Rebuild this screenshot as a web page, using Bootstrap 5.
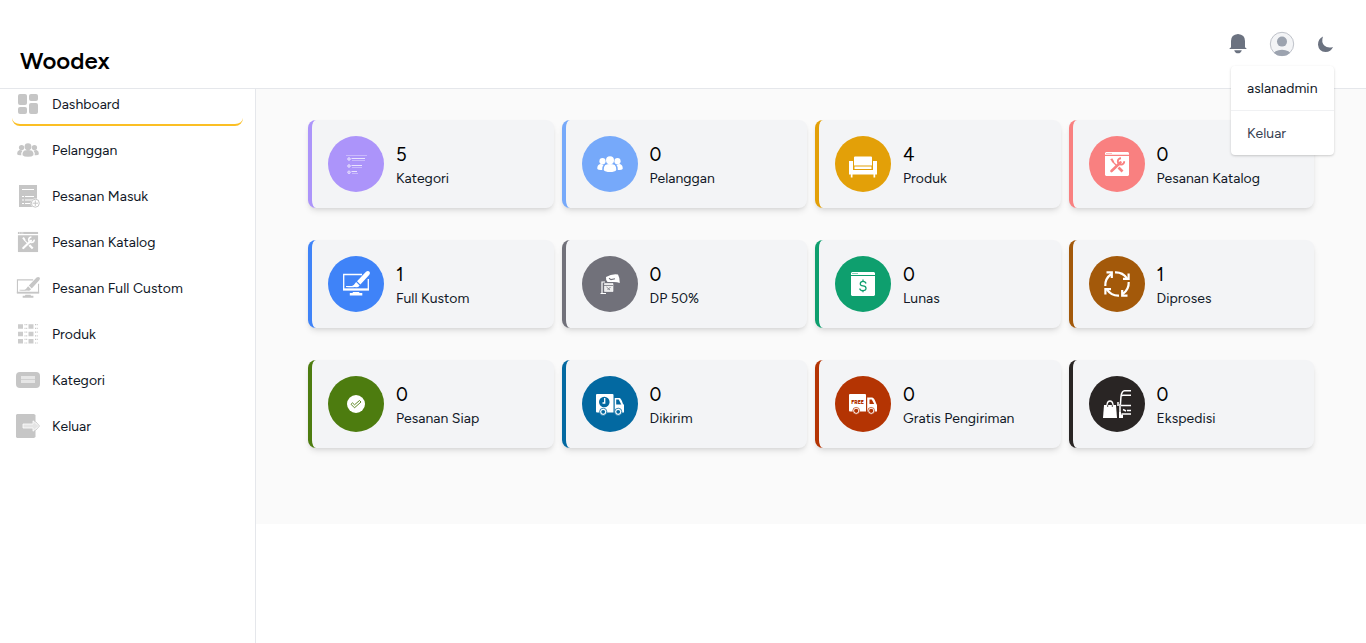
<!DOCTYPE html>
<html lang="id">
<head>
<meta charset="utf-8">
<meta name="viewport" content="width=device-width, initial-scale=1">
<title>Woodex</title>
<link rel="stylesheet" href="https://cdn.jsdelivr.net/npm/bootstrap@5.3.0/dist/css/bootstrap.min.css">
<style>
body{font-family:Figtree,Lato,"Open Sans",sans-serif;font-size:14px;line-height:20px;color:#111827;background:#fff;overflow:hidden}
.shell{height:643px}
.topbar{height:89px;background:#fff;border-bottom:1px solid #e5e7eb;z-index:5;padding:0 31px 0 20px}
.brand{font-size:24px;line-height:32px;font-weight:600;color:#000;margin-top:45px;letter-spacing:0}
.tools{margin-top:32px;gap:22px;height:24px}
.bell{margin-right:-1px}
.side{width:256px;border-right:1px solid #e5e7eb;padding:0 12px}
.side ul{margin-top:-8px}
.side li{height:46px}
.side a{height:45px;padding:3px 4px 0;border-bottom:2px solid transparent;border-radius:8px;color:#111827;text-decoration:none;gap:12px;letter-spacing:.04px}
.side a.active{border-color:#fbbf24}
.side a span{padding-top:2px}
.side svg{color:#c6c6c6}
.board{height:435px;background:#fafafa;padding:31px 52px 0}
.stats{--bs-gutter-x:8px;--bs-gutter-y:32px}
.stat{height:88px;background:#f3f4f6;border-left:4px solid var(--tone);border-radius:8px;padding:16px;box-shadow:0 4px 6px -1px rgba(0,0,0,.1),0 2px 4px -2px rgba(0,0,0,.1)}
.disc{width:56px;height:56px;background:var(--tone);color:#fff;margin-right:12px}
.num{font-size:18.500px;line-height:28px;color:#000}
.lbl{letter-spacing:.04px}
.stat>div:last-child{margin-top:1px}
.user-menu{position:absolute;right:32px;top:66px;width:103px;height:89px;background:#fff;border-radius:4px;box-shadow:0 1px 3px rgba(0,0,0,.12),0 1px 2px rgba(0,0,0,.08);z-index:9}
.user-menu>div{height:44px;padding:13px 16px 11px;letter-spacing:.05px}
.user-menu>div+div{border-top:1px solid #f0f1f3;height:45px;color:#374151;padding-top:13px}
</style>
</head>
<body>
<svg width="0" height="0" class="position-absolute">
<defs>
<symbol id="i-people" viewBox="0 0 28 28"><g fill="currentColor"><circle cx="14" cy="10.200" r="4"/><circle cx="6.500" cy="11.200" r="3.100"/><circle cx="21.500" cy="11.200" r="3.100"/><path d="M9.200 15q4.800-2 9.600 0 2 2.200 1.500 5-1.500 2-6.300 2t-6.300-2q-.5-2.800 1.500-5M7.500 15q-2 2.400-1.300 5-3.700.4-4.900-1-.3-3.600 2.200-4.800 2-.4 4 .8M20.500 15q2 2.400 1.300 5 3.700.4 4.900-1 .3-3.600-2.200-4.800-2-.4-4 .8"/></g></symbol>
<symbol id="i-tools" viewBox="0 0 24 24"><path fill="currentColor" d="M1 0h22l1 1v1.700H0V1zM0 4h24v19l-1 1H1l-1-1z"/><g style="stroke:var(--cut)" fill="none"><path d="M1.500 1.500h5" stroke-dasharray="1 1"/><path d="M6.500 19l9-8.500" stroke-width="2.600" stroke-linecap="round"/><path d="M19.200 9.200a3.200 3.200 0 1 1-3.200-3" stroke-width="1.900"/><path d="M7 9l4.500 4.500" stroke-width="1.300"/><path d="M13.500 15.500l4 4" stroke-width="2.600"/></g><path style="fill:var(--cut)" d="M5.200 7.500l2-1.200 2 3.200-1.200 1z"/></symbol>
<symbol id="i-design" viewBox="0 0 28 28"><path fill="none" stroke="currentColor" stroke-width="1.300" d="M20 4.500H1.700v15h24.600V9"/><path fill="currentColor" d="M1 18.500h26v2H1zM11 22h6l.5 1h2.800v2.500H7.800V23h2.700z"/><path fill="currentColor" d="M15 11.200L24 1.800q2-1.500 3.500-.1 1 1.500-.4 3.400L18.400 14.500zM14.100 12l3.500 3.400q-2 2.800-4.600 1.500-3 .5-9 0v-.8h6q2-.8 4.100-4.100"/></symbol>
</defs>
</svg>
<div class="shell d-flex flex-column">
<header class="topbar d-flex justify-content-between align-items-start flex-shrink-0 position-relative">
  <div class="brand">Woodex</div>
  <div class="tools d-flex align-items-center">
    <svg class="bell" width="20" height="20" viewBox="0 0 20 20" fill="#6b7280"><path d="M10 0Q17 .5 17 7v6.200l1.500 1.200V15h-17v-.600L3 13.200V7Q3 .500 10 0M6.200 16.200h7.600Q13 19.300 10 19.300t-3.800-3.100"/></svg>
    <svg width="26" height="26" viewBox="0 0 26 26"><defs><clipPath id="face"><circle cx="13" cy="13" r="12"/></clipPath></defs><circle cx="13" cy="13" r="11.700" fill="#f3f4f6" stroke="#a6abb5" stroke-width=".7"/><g fill="#9ca3af" clip-path="url(#face)"><circle cx="13" cy="10.600" r="5"/><ellipse cx="13" cy="24" rx="9" ry="5.300"/></g></svg>
    <svg width="18" height="18" viewBox="0 0 18 18"><path fill="#6b7280" d="M6 1.600Q4 7.300 7.300 10.500T16 12q-2 4.900-7.500 5Q1.700 16.700 1 9.800.9 4.200 6 1.600"/></svg>
  </div>
  <div class="user-menu"><div>aslanadmin</div><div>Keluar</div></div>
</header>
<div class="d-flex flex-grow-1">
<nav class="side flex-shrink-0" style="--cut:#fff">
  <ul class="list-unstyled mb-0">
    <li><a class="d-flex align-items-center active" href="#"><svg width="24" height="24" viewBox="0 0 24 24" fill="currentColor"><rect x="2" y="2" width="9" height="11" rx="2"/><rect x="13" y="2" width="9" height="7" rx="2"/><rect x="2" y="15" width="9" height="7" rx="2"/><rect x="13" y="11" width="9" height="11" rx="2"/></svg><span>Dashboard</span></a></li>
    <li><a class="d-flex align-items-center" href="#"><svg width="24" height="24"><use href="#i-people"/></svg><span>Pelanggan</span></a></li>
    <li><a class="d-flex align-items-center" href="#"><svg width="24" height="24" viewBox="0 0 24 24"><path fill="currentColor" d="M3 1h18v22H3z"/><path stroke="#fff" fill="none" d="M6 5.500h12M6 12.500h2m1 0h9M6 16h2m1 0h9M6 19.500h2m1 0h5"/><circle cx="19.300" cy="19.200" r="4.700" fill="#fff"/><circle cx="19.300" cy="19.200" r="4" fill="none" stroke="currentColor"/><path stroke="currentColor" d="M19.300 16.500v5.400m-2.700-2.700H22"/></svg><span>Pesanan Masuk</span></a></li>
    <li><a class="d-flex align-items-center" href="#"><svg width="24" height="24" viewBox="-2 -2 28 28"><use href="#i-tools" width="24" height="24"/></svg><span>Pesanan Katalog</span></a></li>
    <li><a class="d-flex align-items-center" href="#"><svg width="24" height="24"><use href="#i-design"/></svg><span>Pesanan Full Custom</span></a></li>
    <li><a class="d-flex align-items-center" href="#"><svg width="24" height="24" viewBox="0 0 24 24" fill="none" stroke="currentColor"><path stroke-width="4.500" stroke-dasharray="5 5.500" d="M2 4.500h16M2 12h16M2 19.200h16" opacity=".9"/><path stroke-width="1.200" stroke-dasharray="1 .7 1 7.800" d="M8.500 2.700H22M8.500 6.300H22M8.500 10.200H22M8.500 13.800H22M8.500 17.400H22M8.500 21H22"/></svg><span>Produk</span></a></li>
    <li><a class="d-flex align-items-center" href="#"><svg width="24" height="24" viewBox="0 0 24 24"><rect y="4" width="24" height="16" rx="4" fill="currentColor"/><path fill="#e6e6e6" d="M5 8h14v7H5z"/><path stroke="#d0d0d0" d="M5 11.500h14"/></svg><span>Kategori</span></a></li>
    <li><a class="d-flex align-items-center" href="#"><svg width="24" height="24" viewBox="0 0 24 24"><path fill="currentColor" d="M1 0h17l1.500 1v22L18 24H1l-1-1V1z"/><path fill="#e5e5e5" stroke="#fff" stroke-width=".8" d="M7 10h10V6.800l6 5.200-6 5.200V14H7z"/><path fill="none" stroke="currentColor" stroke-width=".9" d="M19.500 7.500l4 4.500-4 4.500"/></svg><span>Keluar</span></a></li>
  </ul>
</nav>
<main class="board flex-grow-1">
  <div class="row row-cols-4 stats">
    <div class="col"><div class="stat d-flex align-items-center" style="--tone:#ac94fa"><div class="disc rounded-circle d-flex align-items-center justify-content-center"><svg width="28" height="28" viewBox="0 0 28 28" fill="none" stroke="#fff"><path opacity=".35" d="M4 5.500h21M10 10.500h13M10 17.500h10M10 23.500h6"/><path opacity=".75" d="M9.500 8.500H23M9.500 15.500H20M9.500 21.500H15"/><g opacity=".65" fill="#fff" fill-opacity=".6"><circle cx="7" cy="9" r="1.300"/><circle cx="7" cy="16" r="1.300"/><circle cx="7" cy="22.300" r="1.300"/></g></svg></div><div><div class="num">5</div><div class="lbl">Kategori</div></div></div></div>
    <div class="col"><div class="stat d-flex align-items-center" style="--tone:#76a9fa"><div class="disc rounded-circle d-flex align-items-center justify-content-center"><svg width="28" height="28"><use href="#i-people"/></svg></div><div><div class="num">0</div><div class="lbl">Pelanggan</div></div></div></div>
    <div class="col"><div class="stat d-flex align-items-center" style="--tone:#e3a008"><div class="disc rounded-circle d-flex align-items-center justify-content-center"><svg width="28" height="28" viewBox="0 0 28 28" fill="#fff"><path d="M5 7.500q0-1 1-1h16q1 0 1 1v8H5zM0 11h4v9h20v-9h4v13.500h-1.800v3h-1.700v-3h-21v3H1.800v-3H0zM5.500 16.500h17V19h-17z"/></svg></div><div><div class="num">4</div><div class="lbl">Produk</div></div></div></div>
    <div class="col"><div class="stat d-flex align-items-center" style="--tone:#f98080;--cut:#f98080"><div class="disc rounded-circle d-flex align-items-center justify-content-center"><svg width="24" height="24"><use href="#i-tools"/></svg></div><div><div class="num">0</div><div class="lbl">Pesanan Katalog</div></div></div></div>
    <div class="col"><div class="stat d-flex align-items-center" style="--tone:#3f83f8;--cut:#3f83f8"><div class="disc rounded-circle d-flex align-items-center justify-content-center"><svg width="28" height="28"><use href="#i-design"/></svg></div><div><div class="num">1</div><div class="lbl">Full Kustom</div></div></div></div>
    <div class="col"><div class="stat d-flex align-items-center" style="--tone:#71717a"><div class="disc rounded-circle d-flex align-items-center justify-content-center"><svg width="28" height="28" viewBox="0 0 28 28" fill="none" stroke="#fff"><path fill="#fff" stroke="none" d="M10 7q6-3.500 12-2.500 2 3.500 1.800 8.500-2.500-1-6-1H11.500l-1.300-2z"/><path stroke="#71717a" stroke-width="1.100" d="M13 8.300l2 1.300 4-.8"/><path stroke-width="1.200" d="M4.500 23.500H10M6 23V12h3"/><path fill="#eee" stroke-width=".6" d="M8.500 13.500h8.500v8H8.500z"/><path stroke="#71717a" stroke-width=".8" d="M8 15.500h9M10.500 17l3.500 3M14.500 17l-3 3"/></svg></div><div><div class="num">0</div><div class="lbl">DP 50%</div></div></div></div>
    <div class="col"><div class="stat d-flex align-items-center" style="--tone:#0e9f6e"><div class="disc rounded-circle d-flex align-items-center justify-content-center"><svg width="24" height="24" viewBox="0 0 24 24"><path fill="#fff" d="M1 0h22l1 1v2H0V1zM0 4h24v19l-1 1H1l-1-1z"/><path fill="none" stroke="#0e9f6e" stroke-dasharray="1 1" d="M1.500 1.500h6"/><path fill="none" stroke="#0e9f6e" stroke-width="1.300" d="M15 11.500Q14.500 9.300 12 9.300T9.300 11.500 12 13.800t3 2.500-3 2.400-3.200-2.200M12 7.500v2m0 9.200v1.500"/></svg></div><div><div class="num">0</div><div class="lbl">Lunas</div></div></div></div>
    <div class="col"><div class="stat d-flex align-items-center" style="--tone:#a3590a"><div class="disc rounded-circle d-flex align-items-center justify-content-center"><svg width="28" height="28" viewBox="0 0 28 28" fill="none" stroke="#fff" stroke-width="2.200"><g id="arc"><path d="M12 2.300q7.500-.4 12 6"/><path d="M25.600 3.500v5.300h-5.600"/></g><use href="#arc" transform="rotate(90 14 14)"/><use href="#arc" transform="rotate(180 14 14)"/><use href="#arc" transform="rotate(270 14 14)"/></svg></div><div><div class="num">1</div><div class="lbl">Diproses</div></div></div></div>
    <div class="col"><div class="stat d-flex align-items-center" style="--tone:#4d7c0f"><div class="disc rounded-circle d-flex align-items-center justify-content-center"><svg width="18" height="18" viewBox="0 0 18 18"><circle cx="9" cy="9" r="9" fill="#fff"/><path fill="none" stroke="#4d7c0f" stroke-width=".9" d="M4 9.300l1.500-1.400 2 1.900L12.500 5.500 14 7l-6.500 5.800z"/></svg></div><div><div class="num">0</div><div class="lbl">Pesanan Siap</div></div></div></div>
    <div class="col"><div class="stat d-flex align-items-center" style="--tone:#0369a1"><div class="disc rounded-circle d-flex align-items-center justify-content-center"><svg width="28" height="28" viewBox="0 0 28 28"><path fill="#fff" d="M1 4h15.500q1 0 1 1v17.500H1q-1 0-1-1V5q0-1 1-1M18.700 8h4.500q2 0 3.600 5.500l1.200 1.500v7.500h-9.300z"/><path fill="var(--tone)" d="M20.200 9.500h2.500l2.600 5h-5.100z"/><g fill="#fff" stroke="var(--tone)" stroke-width=".8"><circle cx="7.200" cy="21.800" r="3.600"/><circle cx="22.200" cy="21.800" r="3.600"/></g><g fill="var(--tone)"><circle cx="7.200" cy="21.800" r="1.900"/><circle cx="22.200" cy="21.800" r="1.900"/><circle cx="8.300" cy="12" r="5.300"/></g><path fill="none" stroke="#fff" stroke-width="1.300" d="M8.700 8v5H6.500"/></svg></div><div><div class="num">0</div><div class="lbl">Dikirim</div></div></div></div>
    <div class="col"><div class="stat d-flex align-items-center" style="--tone:#b43403"><div class="disc rounded-circle d-flex align-items-center justify-content-center"><svg width="28" height="28" viewBox="0 0 28 28"><path fill="#fff" d="M1 4h15q1 0 1 1v16.500H1q-1 0-1-1V5q0-1 1-1M18.200 7.500h5q2 0 4 6l.8 1.500v6.500h-9.800z"/><path fill="#b43403" d="M20.500 9.500h2.200l2.500 4.500h-4.700z"/><g fill="#fff" stroke="#b43403" stroke-width=".7"><circle cx="7.200" cy="20.800" r="3.400"/><circle cx="22.200" cy="20.800" r="3.400"/></g><g fill="#b43403"><circle cx="7.200" cy="20.800" r="2.100"/><circle cx="22.200" cy="20.800" r="2.100"/></g><text x="2.300" y="14.300" font-size="4.900" font-weight="900" textLength="12.500" lengthAdjust="spacingAndGlyphs" fill="#b43403">FREE</text></svg></div><div><div class="num">0</div><div class="lbl">Gratis Pengiriman</div></div></div></div>
    <div class="col"><div class="stat d-flex align-items-center" style="--tone:#292524"><div class="disc rounded-circle d-flex align-items-center justify-content-center"><svg width="28" height="28" viewBox="0 0 28 28" fill="none" stroke="#fff"><path fill="#fff" stroke="none" d="M1 15h12l1 13H0z"/><path stroke-width="1.300" d="M4 17v-2.500q.5-3.500 3-3.500t3 3.500V17"/><path stroke="#292524" stroke-width=".8" d="M4.700 15v2m4.600-2v2"/><path stroke-width="1.500" d="M28 .800h-6.500Q19 1 18 6M28 5.200h-8l-2 1-.6 8.500M15 12v4M17 14v9.500M18 15.500h10M18.500 24h9.500M20 19.500l3 1.500M24 20.500h4"/><path fill="#fff" stroke="none" d="M16 22h2v2.500h2V28h-4z"/></svg></div><div><div class="num">0</div><div class="lbl">Ekspedisi</div></div></div></div>
  </div>
</main>
</div>
</div>
<script src="https://cdn.jsdelivr.net/npm/bootstrap@5.3.0/dist/js/bootstrap.bundle.min.js"></script>
</body>
</html>
